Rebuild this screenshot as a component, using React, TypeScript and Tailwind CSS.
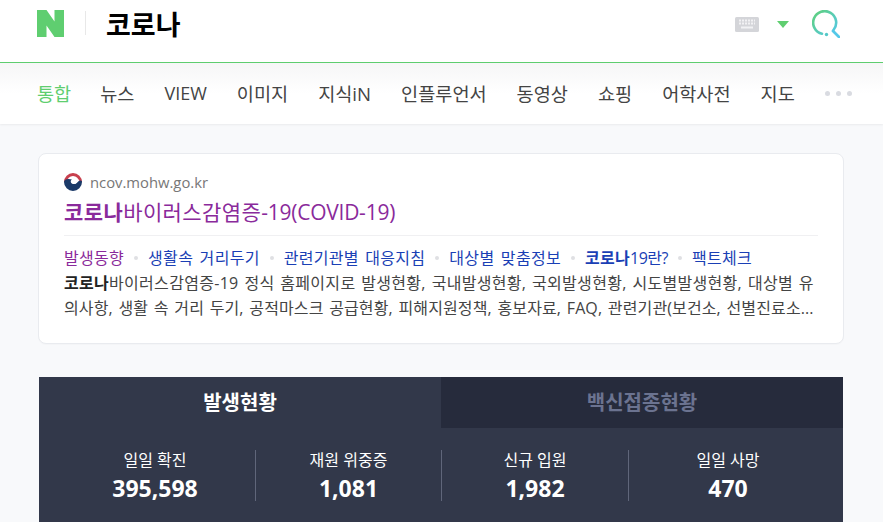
import { ReactNode } from 'react';

const tabs = ['뉴스', 'VIEW', '이미지', '지식iN', '인플루언서', '동영상', '쇼핑', '어학사전', '지도'];

const stats = [
  { label: '일일 확진', value: '395,598' },
  { label: '재원 위중증', value: '1,081' },
  { label: '신규 입원', value: '1,982' },
  { label: '일일 사망', value: '470' },
];

const links: { text: ReactNode; visited?: boolean }[] = [
  { text: '발생동향', visited: true },
  { text: '생활속 거리두기' },
  { text: '관련기관별 대응지침' },
  { text: '대상별 맞춤정보' },
  { text: <><b className="font-bold">코로나</b><span className="tracking-[-0.5px]">19란?</span></> },
  { text: '팩트체크' },
];

const App = () => {
  return (
    <div className="h-[522px] w-[883px] overflow-hidden bg-[#f8f9fb] font-['Open_Sans','Noto_Sans_CJK_KR',sans-serif]">
      {/* Search header */}
      <header className="flex h-[63px] items-start border-b border-[#5fce70] bg-white pl-[37px] pr-[43px] pt-[10px]">
        <svg width="27" height="27" viewBox="0 0 27 27">
          <path d="M0 0h9.500l8 11.500V0H27v27h-9.500l-8-11.500V27H0z" fill="#5fce70" />
        </svg>
        <div className="ml-[21px] mt-[1px] h-[24px] w-px bg-[#e8e8e8]" />
        <h1 className="ml-[20px] text-[27px] font-bold leading-[30px] text-black">코로나</h1>
        <div className="ml-auto flex h-[28px] items-center">
          <svg width="24" height="16" viewBox="0 0 24 16">
            <rect width="24" height="15" y="1" rx="1.5" fill="#d4d5d9" />
            <path d="M4 4.500h16M4 7.500h16" stroke="#f2f2f4" strokeWidth="2" strokeDasharray="2 1" />
            <path d="M6 11.500h12" stroke="#f2f2f4" strokeWidth="2" />
          </svg>
          <svg className="ml-[18px]" width="12" height="7" viewBox="0 0 12 7">
            <path d="M0 0h12L6 7z" fill="#5fce70" />
          </svg>
          <svg className="ml-[23px]" width="28" height="28" viewBox="0 0 28 28" fill="none">
            <defs>
              <linearGradient id="searchGrad" x1="0" y1="0" x2="1" y2="1">
                <stop offset="0" stopColor="#5fd07a" />
                <stop offset="1" stopColor="#54c8e8" />
              </linearGradient>
            </defs>
            <path d="M10 23.800A11.500 11.500 0 1 1 21.500 20" stroke="url(#searchGrad)" strokeWidth="2.600" strokeLinecap="round" />
            <path d="M21 21l6 6" stroke="#54c8e8" strokeWidth="2.800" strokeLinecap="round" />
            <circle cx="14.500" cy="24.500" r="1.700" fill="#54c8c8" />
          </svg>
        </div>
      </header>

      {/* Vertical tabs */}
      <nav className="flex h-[61px] items-center bg-gradient-to-b from-[#f6f6f7] via-white to-white pl-[37px] text-[18.6px] text-[#444] shadow-[0_1px_2px_rgba(0,0,0,0.06)]">
        <span className="text-[#5fce70]">통합</span>
        <div className="ml-[29px] flex items-center gap-[30px]">
          {tabs.map((tab) => (
            <span key={tab} className={tab === 'VIEW' ? 'text-[18px]' : ''}>{tab}</span>
          ))}
        </div>
        <div className="ml-[30px] flex gap-[6px]">
          <i className="h-[5px] w-[5px] rounded-full bg-[#d9dbe1]" />
          <i className="h-[5px] w-[5px] rounded-full bg-[#d9dbe1]" />
          <i className="h-[5px] w-[5px] rounded-full bg-[#d9dbe1]" />
        </div>
      </nav>

      {/* Official site result */}
      <section className="ml-[38px] mt-[29px] h-[191px] w-[806px] rounded-[8px] border border-[#e9ebef] bg-white px-[25px] pt-[17px] shadow-[0_1px_1px_rgba(0,0,0,0.02)]">
        <div className="flex h-[22px] items-center">
          <svg width="18" height="18" viewBox="0 0 18 18" fill="none">
            <circle cx="9" cy="9" r="9" fill="#fff" />
            <path d="M1.500 9A7.500 7.500 0 0 1 16.500 9" stroke="#c8404e" strokeWidth="3" />
            <path d="M0 9a9 9 0 0 0 18 0c0-1-.5-1.500-1.500-1.500-3 0-3 3-6 3.500C7 11.500 5.500 8 8 6.500 5 5.500 0 5.500 0 9z" fill="#1b3a68" />
            <path d="M15.500 7.500C14 5.500 10.500 5 8 6.500c3 .5 3 3 2.500 4.500 3-.5 3-3 5-3.500z" fill="#fff" />
          </svg>
          <span className="ml-[8px] text-[14.8px] text-[#777]">ncov.mohw.go.kr</span>
        </div>
        <h2 className="mt-[6px] text-[21px] leading-[26px] text-[#8a2a9b]">
          <span className="tracking-[0.4px]"><b className="font-bold">코로나</b>바이러스감염증</span>
          <span className="tracking-[-0.25px]">-19(COVID-19)</span>
        </h2>
        <div className="mt-[10px] flex h-[36px] items-center whitespace-nowrap border-t border-[#f0f0f2] pt-[9px] text-[16px] tracking-[0.3px] text-[#1a3fb5] [word-spacing:2px]">
          {links.map((link, i) => (
            <span key={i} className="flex items-center">
              {i > 0 && <i className="mx-[10px] h-[4px] w-[4px] rounded-full bg-[#dfe0e3]" />}
              <span className={link.visited ? 'text-[#8a2a9b]' : ''}>{link.text}</span>
            </span>
          ))}
        </div>
        <p className="whitespace-nowrap text-[16px] leading-[25px] text-[#444]">
          <span className="block tracking-[0.3px] [word-spacing:1.4px]">
            <b className="font-bold text-[#222]">코로나</b>바이러스감염증-19 정식 홈페이지로 발생현황, 국내발생현황, 국외발생현황, 시도별발생현황, 대상별 유
          </span>
          <span className="block tracking-[0.12px] [word-spacing:1.4px]">
            의사항, 생활 속 거리 두기, 공적마스크 공급현황, 피해지원정책, 홍보자료, FAQ, 관련기관(보건소, 선별진료소...
          </span>
        </p>
      </section>

      {/* Status panel */}
      <section className="ml-[39px] mt-[33px] h-[200px] w-[804px] bg-[#32384a]">
        <div className="flex h-[51px] text-[20px] font-bold">
          <div className="flex w-[402px] items-center justify-center text-white">발생현황</div>
          <div className="flex w-[402px] items-center justify-center bg-[#262b3c] text-[#6b7390]">백신접종현황</div>
        </div>
        <div className="mt-[22px] grid grid-cols-[201px_186px_187px_1fr] px-4">
          {stats.map((stat, i) => (
            <div key={stat.label} className={`flex h-[51px] flex-col items-center justify-between ${i < 3 ? 'border-r border-[#60667a]' : ''}`}>
              <span className="text-[16px] leading-[20px] text-white">{stat.label}</span>
              <span className="text-[23px] font-bold leading-[26px] text-white">{stat.value}</span>
            </div>
          ))}
        </div>
      </section>
    </div>
  );
};

export default App;
